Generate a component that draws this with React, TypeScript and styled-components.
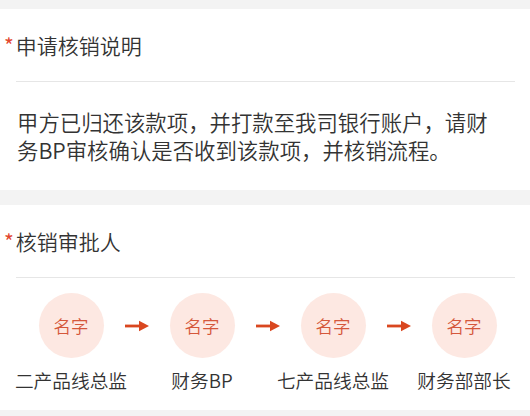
import styled, { createGlobalStyle } from "styled-components";

const GlobalStyle = createGlobalStyle`
    html, body {
        margin: 0;
        padding: 0;
        background: #f3f3f3;
    }
    body {
        font-family: "Noto Sans CJK SC", "Noto Sans", sans-serif;
        color: #333333;
    }
`;

const StyledPage = styled.div`
    width: 530px;
    height: 416px;
    overflow: hidden;
    background: #f3f3f3;
    padding-top: 9px;
    box-sizing: border-box;
`;

const StyledSection = styled.section<{ gapTop?: number }>`
    background: #ffffff;
    margin-top: ${props => props.gapTop || 0}px;
`;

const StyledHeader = styled.div`
    height: 72px;
    display: flex;
    align-items: center;
    padding-left: 4px;
`;

const StyledStar = styled.span`
    color: #e2472f;
    font-size: 21px;
    line-height: 1;
    margin-top: 0px;
    margin-right: 2px;
`;

const StyledTitle = styled.h2`
    margin: 0;
    font-size: 21px;
    font-weight: 350;
    color: #333333;
    line-height: 28px;
`;

const StyledDivider = styled.div`
    height: 1px;
    background: #e6e6e6;
    margin: 0 15px 0 16px;
`;

const StyledParagraph = styled.p`
    margin: 0;
    padding: 26px 30px 26px 17px;
    font-size: 21.4px;
    font-weight: 350;
    line-height: 28px;
    color: #333333;
`;

const StyledSteps = styled.div`
    display: flex;
    align-items: flex-start;
    padding: 15px 0 18px 16px;
`;

const StyledStep = styled.div`
    width: 110px;
    display: flex;
    flex-direction: column;
    align-items: center;
`;

const StyledAvatar = styled.div`
    width: 65px;
    height: 65px;
    border-radius: 50%;
    background: #fde8e2;
    color: #d5573b;
    font-size: 17.5px;
    font-weight: 350;
    display: flex;
    align-items: center;
    justify-content: center;
`;

const StyledLabel = styled.div`
    margin-top: 10px;
    font-size: 18.7px;
    font-weight: 350;
    line-height: 24px;
    color: #333333;
    white-space: nowrap;
`;

const StyledArrow = styled.div`
    width: 21px;
    height: 65px;
    display: flex;
    align-items: center;
    justify-content: center;
`;

const Arrow = () => (
    <StyledArrow>
        <svg width="24" height="12" viewBox="0 0 24 12" style={{ flexShrink: 0 }}>
            <rect x="0" y="4.6" width="16" height="2.8" fill="#d9471f" />
            <polygon points="14,0.8 24,6 14,11.2" fill="#d9471f" />
        </svg>
    </StyledArrow>
);

const approvers = ["二产品线总监", "财务BP", "七产品线总监", "财务部部长"];

export default function App() {
    return (
        <StyledPage>
            <GlobalStyle />
            <StyledSection>
                <StyledHeader>
                    <StyledStar>*</StyledStar>
                    <StyledTitle>申请核销说明</StyledTitle>
                </StyledHeader>
                <StyledDivider />
                <StyledParagraph>
                    甲方已归还该款项，并打款至我司银行账户，请财务BP审核确认是否收到该款项，并核销流程。
                </StyledParagraph>
            </StyledSection>
            <StyledSection gapTop={15}>
                <StyledHeader>
                    <StyledStar>*</StyledStar>
                    <StyledTitle>核销审批人</StyledTitle>
                </StyledHeader>
                <StyledDivider />
                <StyledSteps>
                    {approvers.map((name, i) => (
                        <div key={name} style={{ display: "contents" }}>
                            {i > 0 && <Arrow />}
                            <StyledStep>
                                <StyledAvatar>名字</StyledAvatar>
                                <StyledLabel>{name}</StyledLabel>
                            </StyledStep>
                        </div>
                    ))}
                </StyledSteps>
            </StyledSection>
        </StyledPage>
    );
}
